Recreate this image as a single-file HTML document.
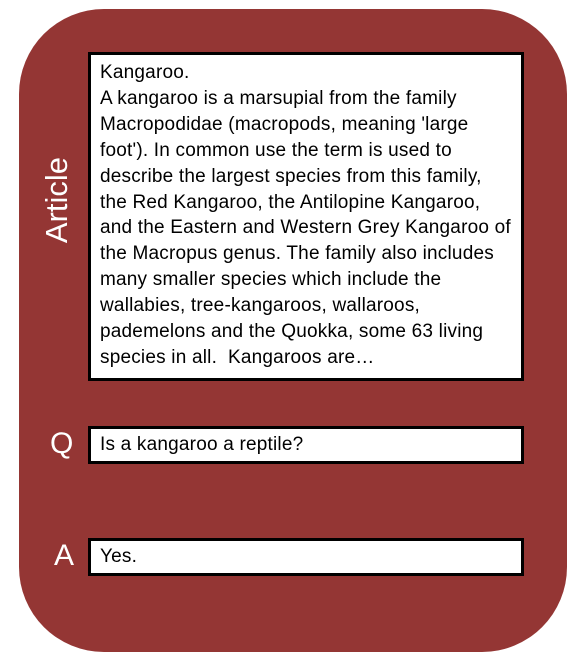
<!DOCTYPE html>
<html><head><style>
body{margin:0;width:587px;height:671px;background:#fff;position:relative;overflow:hidden;font-family:"Liberation Sans",sans-serif}
.bg{position:absolute;left:19px;top:9px;width:548px;height:643px;background:#943634;border-radius:85px}
.box{position:absolute;left:88px;width:430px;background:#fff;border:3px solid #000;color:#000;font-size:19px;letter-spacing:0.2px}
.t{position:absolute;left:9px;top:7px;line-height:25.9px;white-space:nowrap}
.lbl{position:absolute;color:#fff;font-size:30px}
</style></head><body>
<div class="bg"></div>
<div class="lbl" style="left:2px;top:182px;width:110px;text-align:center;transform:rotate(-90deg);font-size:31px">Article</div>
<div class="box" style="top:52px;height:323px"><div class="t" style="top:5px">Kangaroo.<br>A kangaroo is a marsupial from the family<br>Macropodidae (macropods, meaning 'large<br>foot'). In common use the term is used to<br>describe the largest species from this family,<br>the Red Kangaroo, the Antilopine Kangaroo,<br>and the Eastern and Western Grey Kangaroo of<br>the Macropus genus. The family also includes<br>many smaller species which include the<br>wallabies, tree-kangaroos, wallaroos,<br>pademelons and the Quokka, some 63 living<br>species in all.&nbsp; Kangaroos are…</div></div>
<div class="lbl" style="left:50px;top:427px">Q</div>
<div class="box" style="top:426px;height:32px"><div class="t" style="top:3px">Is a kangaroo a reptile?</div></div>
<div class="lbl" style="left:54px;top:539px">A</div>
<div class="box" style="top:538px;height:32px"><div class="t" style="top:3px">Yes.</div></div>
</body></html>
